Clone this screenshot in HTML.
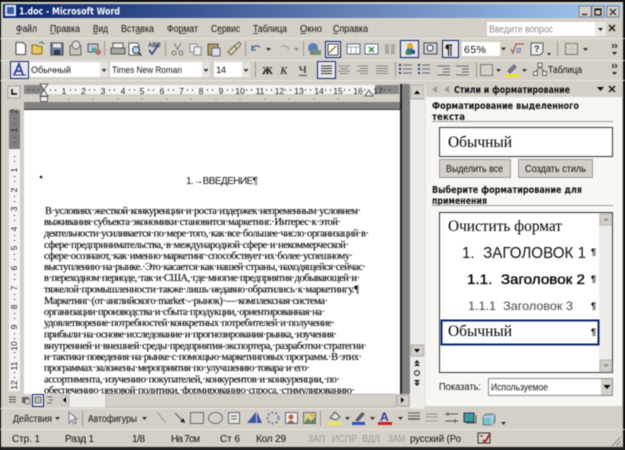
<!DOCTYPE html>
<html><head><meta charset="utf-8"><title>1.doc - Microsoft Word</title>
<style>
html,body{margin:0;padding:0;background:#000;width:625px;height:450px;overflow:hidden}
svg{display:block;filter:blur(.42px)}
text{font-family:"Liberation Sans",sans-serif;font-size:10px;fill:#111;white-space:pre}
.s{font-family:"Liberation Serif",serif;font-size:10.5px;fill:#000;stroke:#000;stroke-width:.12px}
.b{font-family:"DejaVu Sans",sans-serif;font-size:10px;font-weight:bold;fill:#111}
.g{fill:#999}
.r{font-size:8.5px;text-anchor:middle;fill:#222}
</style></head><body>
<svg xmlns="http://www.w3.org/2000/svg" width="625" height="450" viewBox="0 0 625 450">
<defs>
<linearGradient id="t" x1="0" x2="1" y1="0" y2="0"><stop offset="0" stop-color="#0a246a"/><stop offset="1" stop-color="#a6caf0"/></linearGradient>
</defs>
<rect width="625" height="450" fill="#111"/>
<rect x="1" y="2" width="622" height="446" fill="#d4d0c8"/>
<rect x="3" y="4" width="618" height="14" fill="url(#t)"/>
<rect x="5" y="5" width="11" height="11" fill="#dfe6f2"/><rect x="7" y="7" width="7" height="7" fill="#3a5fa8"/>
<text x="19" y="14.5" class="b" fill="#fff" style="fill:#fff" textLength="101" lengthAdjust="spacingAndGlyphs">1.doc - Microsoft Word</text>
<g fill="#d4d0c8" stroke="#555" stroke-width=".6"><rect x="579" y="6" width="12" height="11"/><rect x="592" y="6" width="12" height="11"/><rect x="607" y="6" width="12" height="11"/></g>
<path d="M582 14.5h5M595 9h6v6h-6zM595 9.6h6M610 9l6 6M616 9l-6 6" stroke="#111" stroke-width="1.2" fill="none"/>

<!-- menu -->
<g>
<text x="16" y="32" textLength="21" lengthAdjust="spacingAndGlyphs">Файл</text>
<text x="50" y="32" textLength="30" lengthAdjust="spacingAndGlyphs">Правка</text>
<text x="93" y="32" textLength="15" lengthAdjust="spacingAndGlyphs">Вид</text>
<text x="121" y="32" textLength="33" lengthAdjust="spacingAndGlyphs">Вставка</text>
<text x="167" y="32" textLength="31" lengthAdjust="spacingAndGlyphs">Формат</text>
<text x="211" y="32" textLength="29" lengthAdjust="spacingAndGlyphs">Сервис</text>
<text x="253" y="32" textLength="34" lengthAdjust="spacingAndGlyphs">Таблица</text>
<text x="300" y="32" textLength="22" lengthAdjust="spacingAndGlyphs">Окно</text>
<text x="333" y="32" textLength="35" lengthAdjust="spacingAndGlyphs">Справка</text>
<path d="M16 33.5h5M50 33.5h5M93 33.5h5M136 33.5h5M180 33.5h6M218 33.5h5M253 33.5h5M300 33.5h6M333 33.5h5" stroke="#333" stroke-width=".7"/>
</g>
<rect x="487" y="22" width="108" height="14" fill="#fff"/><rect x="595" y="22" width="11" height="14" fill="#e8e6e0"/>
<text x="489" y="32.500" style="fill:#8a8a8a" textLength="64" lengthAdjust="spacingAndGlyphs">Введите вопрос</text>
<path d="M598 28h5l-2.500 3z" fill="#222"/><path d="M609 25l6 6M615 25l-6 6" stroke="#111" stroke-width="1.400"/>

<!-- separators -->
<path d="M0 38.500H625M0 60.500H625M0 80.500H625" stroke="#ecebe6" stroke-width=".7"/>
<path d="M104.500 41v15M165.500 41v15M245.500 41v15M303.500 41v15M557.500 41v15M255 60" stroke="#9a968c"/>
<path d="M395.500 62v15M476.500 62v15M255.500 62v15" stroke="#9a968c"/>

<!-- toolbar 1 icons -->
<path d="M16 42.500h7l2.500 2.500v9.500H16z" fill="#fff" stroke="#444"/>
<path d="M32 45h5l1 1.500h4v7.500H32z" fill="#e8c860" stroke="#8a7020"/><path d="M39 43l3 -1 2 2" stroke="#2a7a50" fill="none"/>
<rect x="51" y="43" width="12" height="12" fill="#6c7f9a" stroke="#445"/><rect x="53" y="43.500" width="8" height="4" fill="#e8e8e8"/><rect x="54" y="50" width="6" height="5" fill="#2c3a55"/>
<rect x="70" y="46" width="11" height="9" fill="#c8c8c0" stroke="#666"/><circle cx="76" cy="45" r="4" fill="#ddd" stroke="#666"/>
<rect x="88" y="44" width="10" height="8" fill="#b8c8d8" stroke="#556"/><circle cx="98" cy="52" r="3" fill="#c07070"/><circle cx="94" cy="50" r="2.500" fill="#50a0a0"/>
<rect x="111" y="48" width="14" height="6" fill="#a8a8a0" stroke="#555"/><rect x="113" y="43" width="10" height="5" fill="#eee" stroke="#555"/>
<path d="M129 43h8l2 2v10h-10z" fill="#fff" stroke="#555"/><circle cx="136" cy="50" r="3.500" fill="#b8d8e8" stroke="#334"/><path d="M138.500 52.500l3 3" stroke="#333" stroke-width="1.500"/>
<text x="148" y="47" style="font-size:6px;font-weight:bold;fill:#335">ABC</text><path d="M149 50l3 4 7-10" stroke="#3a4a8a" stroke-width="1.800" fill="none"/>
<path d="M174 43l4 7M181 43l-4 7" stroke="#777"/><circle cx="174" cy="53" r="2" fill="none" stroke="#777"/><circle cx="181" cy="53" r="2" fill="none" stroke="#777"/>
<rect x="190" y="44" width="7" height="8" fill="#eee" stroke="#889"/><rect x="194" y="47" width="7" height="8" fill="#eee" stroke="#889"/>
<rect x="208" y="44" width="10" height="11" fill="#b09a60" stroke="#555"/><rect x="212" y="48" width="8" height="8" fill="#dde" stroke="#667"/>
<path d="M228 52l6-6 3 3-6 6zM234 46l5-4 2 2-4 5" fill="#ded2a8" stroke="#665"/>
<path d="M252 50a5 5 0 0 1 8-3M252 45v5h4" stroke="#5a6ca0" stroke-width="1.500" fill="none"/><path d="M266 48h5l-2.500 3z" fill="#333"/>
<path d="M289 50a5 5 0 0 0-8-3" stroke="#a8a8a8" stroke-width="1.500" fill="none"/><path d="M294 48h5l-2.500 3z" fill="#888"/>
<circle cx="313" cy="48" r="5" fill="#5a80b8"/><rect x="310" y="50" width="11" height="5" fill="#70907a"/>
<rect x="325.500" y="41.500" width="15" height="16" fill="#e8e6e8" stroke="#0a246a"/><rect x="328" y="44" width="10" height="11" fill="#fff" stroke="#444"/><path d="M329 53l7-7" stroke="#a08020" stroke-width="1.500"/>
<rect x="347" y="44" width="13" height="10" fill="#fff" stroke="#5a6a8a"/><path d="M347 47h13M351 47v7M356 47v7" stroke="#7a8aa0" stroke-width=".7"/>
<rect x="365" y="44" width="13" height="10" fill="#fff" stroke="#5a6a8a"/><path d="M369 47l5 5M374 47l-5 5" stroke="#2a8a4a" stroke-width="1.500"/>
<rect x="385" y="44" width="4" height="10" fill="#a8a8a0"/><rect x="391" y="44" width="4" height="10" fill="#a8a8a0"/>
<rect x="400.500" y="40.500" width="18" height="17" fill="#e8e6e8" stroke="#0a246a"/><path d="M405 53l4-8 4 3-2 6z" fill="#3060b0"/><circle cx="410" cy="46" r="3" fill="#d8b020"/><rect x="406" y="50" width="5" height="5" fill="#3a8a50"/><rect x="411" y="50" width="4" height="4" fill="#2848a0"/>
<rect x="424" y="43" width="13" height="11" fill="#cfd4e0" stroke="#445"/><circle cx="430" cy="48" r="3" fill="#fff" stroke="#333"/>
<rect x="442.500" y="40.500" width="16" height="17" fill="#e8e6e8" stroke="#0a246a"/><text x="445" y="54" style="font-size:14px;font-weight:bold;fill:#111">¶</text>
<rect x="462" y="42" width="38" height="14" fill="#fff"/><text x="464" y="53" style="font-size:10.500px" textLength="22">65%</text><path d="M501 47.500h5l-2.500 3z" fill="#333"/>
<path d="M511 49l2 4 3-9h8" stroke="#a04040" fill="none"/><text x="516" y="53" style="font-size:9px;fill:#5060a0;font-style:italic">α</text>
<path d="M531 43h12v9l-3 3h-9z" fill="#eee" stroke="#555"/><text x="534" y="52" style="font-size:9px;font-weight:bold;fill:#334">?</text><path d="M547 53h4l-2 2.500z" fill="#333"/>
<rect x="565.500" y="43.500" width="12" height="11" fill="none" stroke="#777"/><path d="M565 49h12M571.500 43v11" stroke="#aaa" stroke-dasharray="1 1"/><path d="M583 48h5l-2.500 3z" fill="#333"/>
<path d="M612 44l2 2 -2 2M615 44l2 2-2 2" stroke="#222" fill="none"/><path d="M612 52h5l-2.500 3z" fill="#222"/>

<!-- toolbar 2 -->
<rect x="10.500" y="61.500" width="18" height="17" fill="#e8e6e8" stroke="#0a246a"/><path d="M14 75l5-11 4 11M16 71h6" stroke="#2840a0" stroke-width="1.800" fill="none"/><path d="M13 75h13" stroke="#2840a0"/>
<rect x="29" y="62" width="79" height="15" fill="#fff"/><rect x="100" y="62" width="8" height="15" fill="#e4e2dc"/><path d="M101.500 69h5l-2.500 3z" fill="#333"/>
<text x="31" y="73" style="font-size:9.500px" textLength="40" lengthAdjust="spacingAndGlyphs">Обычный</text>
<rect x="110" y="62" width="100" height="15" fill="#fff"/><rect x="202" y="62" width="8" height="15" fill="#e4e2dc"/><path d="M203.500 69h5l-2.500 3z" fill="#333"/>
<text x="112" y="73" style="font-size:9.500px" textLength="70" lengthAdjust="spacingAndGlyphs">Times New Roman</text>
<rect x="214" y="62" width="36" height="15" fill="#fff"/><rect x="242" y="62" width="8" height="15" fill="#e4e2dc"/><path d="M243.500 69h5l-2.500 3z" fill="#333"/>
<text x="216" y="73" style="font-size:9.500px" textLength="10">14</text>
<text x="262" y="74" style="font-family:'Liberation Serif',serif;font-size:11px;font-weight:bold">Ж</text>
<text x="280" y="74" style="font-family:'Liberation Serif',serif;font-size:11px;font-style:italic;font-weight:bold;fill:#444">К</text>
<text x="299" y="73" style="font-size:10.500px;font-weight:bold;fill:#444">Ч</text><path d="M299 75.500h8" stroke="#444"/>
<rect x="317.500" y="61.500" width="18" height="17" fill="#e8e6e8" stroke="#0a246a"/><path d="M321 66h11M321 68.500h11M321 71h11M321 73.500h11" stroke="#333"/>
<path d="M338 66h12M340 68.500h8M338 71h12M340 73.500h8M357 66h11M360 68.500h8M357 71h11M360 73.500h8M376 66h12M376 68.500h12M376 71h12M376 73.500h12" stroke="#888"/>
<path d="M403 65h9M403 69h9M403 73h9M437 66h13M443 69h7M443 72h7M437 75h13M456 66h13M462 69h7M462 72h7M456 75h13M422 65h8M422 69h8M422 73h8" stroke="#667" stroke-width="1"/>
<path d="M399 65h2M399 69h2M399 73h2M418 65h2M418 69h2M418 73h2" stroke="#1a3a80" stroke-width="2"/>
<rect x="480.500" y="64.500" width="12" height="11" fill="none" stroke="#777"/><path d="M496 69h5l-2.500 3z" fill="#333"/>
<path d="M508 71l6-6 2 2-6 6z" fill="#889" stroke="#557"/><rect x="505" y="74" width="14" height="3" fill="#f0e020"/><path d="M522 69h5l-2.500 3z" fill="#333"/>
<rect x="538" y="63" width="4" height="4" fill="#eee" stroke="#666"/><rect x="533.500" y="71.500" width="4" height="4" fill="#eee" stroke="#666"/><rect x="542.500" y="71.500" width="4" height="4" fill="#eee" stroke="#666"/><path d="M540 67l-4 4M540 67l4 4" stroke="#666"/>
<text x="548" y="73" textLength="34" lengthAdjust="spacingAndGlyphs">Таблица</text>
<path d="M612 64l2 2 -2 2M615 64l2 2-2 2" stroke="#222" fill="none"/><path d="M612 72h5l-2.500 3z" fill="#222"/>

<!-- doc area -->
<rect x="8" y="86" width="12" height="12" fill="#e4e2dc" stroke="#888" stroke-width=".7"/><path d="M12 89v5h5" stroke="#000" stroke-width="1.500" fill="none"/>
<rect x="24" y="85" width="376" height="24" fill="#d4d0c8"/>
<rect x="24" y="85" width="20" height="9" fill="#888"/><rect x="44" y="85" width="331" height="9" fill="#f4f4f2"/><rect x="375" y="85" width="24" height="9" fill="#888"/>
<rect x="24" y="102" width="376" height="7" fill="#808080"/>
<rect x="24" y="109" width="376" height="1.500" fill="#333"/>
<g>
<text class="r" x="64" y="94">1</text><text class="r" x="83.500" y="94">2</text><text class="r" x="103" y="94">3</text><text class="r" x="123" y="94">4</text><text class="r" x="142" y="94">5</text><text class="r" x="162" y="94">6</text><text class="r" x="181.500" y="94">7</text><text class="r" x="201" y="94">8</text><text class="r" x="221" y="94">9</text><text class="r" x="240" y="94">10</text><text class="r" x="260" y="94">11</text><text class="r" x="279.500" y="94">12</text><text class="r" x="299" y="94">13</text><text class="r" x="319" y="94">14</text><text class="r" x="338" y="94">15</text><text class="r" x="358" y="94">16</text><text class="r" x="378" y="94">17</text>
</g>
<path d="M28 90h1M33 90h1M38 90h1M50 90h1M55 90h1M70 90h1M75 90h1M89 90h1M94 90h1M109 90h1M114 90h1M129 90h1M134 90h1M148 90h1M153 90h1M168 90h1M173 90h1M187 90h1M192 90h1M207 90h1M212 90h1M227 90h1M232 90h1M246 90h1M251 90h1M266 90h1M271 90h1M285 90h1M290 90h1M305 90h1M310 90h1M325 90h1M330 90h1M344 90h1M349 90h1M364 90h1M384 90h1M389 90h1" stroke="#333" stroke-width="1.500"/>
<path d="M69 98v2M93 98v2M118 98v2M142 98v2M167 98v2M191 98v2M216 98v2M240 98v2M265 98v2M289 98v2M314 98v2M338 98v2" stroke="#999"/>
<path d="M40 84h8l-4 6zM40 96l4-6 4 6z" fill="#eee" stroke="#444" stroke-width=".8"/><rect x="40.500" y="96.500" width="7" height="5" fill="#eee" stroke="#444" stroke-width=".8"/>
<path d="M365 96l4-6 4 6z" fill="#eee" stroke="#444" stroke-width=".8"/>

<rect x="9" y="110" width="11" height="39" fill="#808080"/><rect x="9" y="149" width="11" height="242" fill="#f4f4f2"/>
<g style="font-size:8.500px">
<text class="r" transform="translate(17,111) rotate(-90)">2</text><text class="r" transform="translate(17,130) rotate(-90)">1</text>
<text class="r" transform="translate(17,170) rotate(-90)">1</text><text class="r" transform="translate(17,190) rotate(-90)">2</text><text class="r" transform="translate(17,209) rotate(-90)">3</text><text class="r" transform="translate(17,229) rotate(-90)">4</text><text class="r" transform="translate(17,248) rotate(-90)">5</text><text class="r" transform="translate(17,268) rotate(-90)">6</text><text class="r" transform="translate(17,288) rotate(-90)">7</text><text class="r" transform="translate(17,307) rotate(-90)">8</text><text class="r" transform="translate(17,327) rotate(-90)">9</text><text class="r" transform="translate(17,346) rotate(-90)">10</text><text class="r" transform="translate(17,366) rotate(-90)">11</text><text class="r" transform="translate(17,385) rotate(-90)">12</text>
</g>
<path d="M14.500 118v1M14.500 123v1M14.500 137v1M14.500 142v1M14.500 156v1M14.500 161v1M14.500 176v1M14.500 181v1M14.500 196v1M14.500 201v1M14.500 215v1M14.500 220v1M14.500 235v1M14.500 240v1M14.500 254v1M14.500 259v1M14.500 274v1M14.500 279v1M14.500 294v1M14.500 299v1M14.500 313v1M14.500 318v1M14.500 333v1M14.500 338v1M14.500 352v1M14.500 357v1M14.500 372v1M14.500 377v1" stroke="#333" stroke-width="1.200"/>

<rect x="24" y="110" width="376" height="284" fill="#fff"/>
<rect x="400" y="84" width="2" height="310" fill="#222"/><rect x="402" y="84" width="8" height="310" fill="#808080"/>
<rect x="410" y="84" width="14" height="324" fill="#eeece8"/>
<rect x="411" y="85" width="13" height="14" fill="#d4d0c8" stroke="#888" stroke-width=".6"/><path d="M414 94h6l-3-3.500z" fill="#000"/>
<rect x="411" y="345" width="13" height="11" fill="#d4d0c8" stroke="#888" stroke-width=".6"/><path d="M414 349h6l-3 3.500z" fill="#000"/>
<path d="M414 363l3-3 3 3zM414 366l3-3 3 3" fill="#222"/><circle cx="417" cy="373" r="2.500" fill="#ddd" stroke="#222"/><path d="M414 383l3 3 3-3zM414 380l3 3 3-3" fill="#222"/>

<g clip-path="url(#c)">
<clipPath id="c"><rect x="24" y="110" width="376" height="284"/></clipPath>
<circle cx="41" cy="177" r="1.300" fill="#111"/>
<text x="186" y="184" style="font-size:10px;fill:#111" textLength="72" lengthAdjust="spacing">1.→ВВЕДЕНИЕ¶</text>
<text class="s" x="45" y="214" textLength="316">В·условиях·жесткой·конкуренции·и·роста·издержек·непременным·условием·</text>
<text class="s" x="44" y="225" textLength="297">выживания·субъекта·экономики·становится·маркетинг.·Интерес·к·этой·</text>
<text class="s" x="44" y="236.500" textLength="325">деятельности·усиливается·по·мере·того,·как·все·большее·число·организаций·в·</text>
<text class="s" x="44" y="248" textLength="305">сфере·предпринимательства,·в·международной·сфере·и·некоммерческой·</text>
<text class="s" x="44" y="259" textLength="309">сфере·осознают,·как·именно·маркетинг·способствует·их·более·успешному·</text>
<text class="s" x="44" y="270" textLength="322">выступлению·на·рынке.·Это·касается·как·нашей·страны,·находящейся·сейчас·</text>
<text class="s" x="44" y="281" textLength="316">в·переходном·периоде,·так·и·США,·где·многие·предприятия·добывающей·и·</text>
<text class="s" x="44" y="292.500" textLength="315">тяжелой·промышленности·также·лишь·недавно·обратились·к·маркетингу.¶</text>
<text class="s" x="44" y="304" textLength="284">Маркетинг·(от·английского·market·-·рынок)·—·комплексная·система·</text>
<text class="s" x="44" y="315" textLength="281">организации·производства·и·сбыта·продукции,·ориентированная·на·</text>
<text class="s" x="44" y="326" textLength="291">удовлетворение·потребностей·конкретных·потребителей·и·получение·</text>
<text class="s" x="44" y="337.500" textLength="293">прибыли·на·основе·исследование·и·прогнозирования·рынка,·изучения·</text>
<text class="s" x="44" y="349" textLength="323">внутренней·и·внешней·среды·предприятия-экспортера,·разработки·стратегии·</text>
<text class="s" x="44" y="360" textLength="318">и·тактики·поведения·на·рынке·с·помощью·маркетинговых·программ.·В·этих·</text>
<text class="s" x="44" y="371" textLength="266">программах·заложены·мероприятия·по·улучшению·товара·и·его·</text>
<text class="s" x="44" y="382.500" textLength="296">ассортимента,·изучению·покупателей,·конкурентов·и·конкуренции,·по·</text>
<text class="s" x="44" y="393.500" textLength="311">обеспечению·ценовой·политики,·формированию·спроса,·стимулированию·</text>
</g>

<!-- h scroll -->
<rect x="2" y="394" width="408" height="14" fill="#d4d0c8"/>
<rect x="60" y="394" width="340" height="13" fill="#eeece8"/>
<rect x="106" y="394" width="290" height="13" fill="#d4d0c8" stroke="#aaa" stroke-width=".6"/>
<rect x="61" y="395" width="8" height="11" fill="#d4d0c8" stroke="#999" stroke-width=".6"/><path d="M66 397v6l-3-3z" fill="#000"/>
<rect x="397" y="395" width="12" height="11" fill="#d4d0c8" stroke="#888" stroke-width=".6"/><path d="M401 397v6l3-3z" fill="#000"/>
<path d="M9 397h7M9 399.500h7M9 402h7" stroke="#555"/>
<rect x="22" y="397" width="7" height="6" fill="#666"/><rect x="25" y="399" width="5" height="5" fill="#ccc" stroke="#444" stroke-width=".5"/>
<rect x="32.500" y="394.500" width="11" height="12" fill="#e8e6e8" stroke="#0a246a"/><rect x="35" y="397" width="6" height="6" fill="#bbb" stroke="#444" stroke-width=".7"/>
<path d="M47 397h5M49 400h4M47 403h5" stroke="#666"/>

<!-- drawing toolbar -->
<path d="M0 408.500H424" stroke="#ecebe6" stroke-width=".7"/>
<path d="M82.500 411v15M320.500 411v15" stroke="#9a968c"/>
<text x="13" y="422" textLength="39" lengthAdjust="spacingAndGlyphs">Действия</text><path d="M55 417h5l-2.500 3z" fill="#333"/>
<path d="M69 412v11l3-3 2 4 2-1-2-4h3z" fill="#eee" stroke="#778"/>
<text x="88" y="422" textLength="49" lengthAdjust="spacingAndGlyphs">Автофигуры</text><path d="M142 417h5l-2.500 3z" fill="#333"/>
<path d="M157 412l9 11" stroke="#999"/><path d="M175 413l9 9" stroke="#555"/><path d="M185 423l-5-1.500 3.500-3.500z" fill="#223"/>
<rect x="190.500" y="412.500" width="13" height="11" fill="none" stroke="#667"/><ellipse cx="215.500" cy="418" rx="7" ry="5.500" fill="none" stroke="#667"/>
<rect x="228.500" y="412.500" width="11" height="11" fill="#e8e8e0" stroke="#667"/><path d="M231 416h6M231 419h6" stroke="#667"/>
<path d="M247 423l9-11v11zM257 412l5 11h-5z" fill="#3454a8"/>
<circle cx="273" cy="418" r="5.500" fill="none" stroke="#6a7aa0" stroke-width="2" stroke-dasharray="2 2"/>
<rect x="285.500" y="412.500" width="12" height="11" fill="#eee" stroke="#667"/><circle cx="291" cy="417" r="2.500" fill="#c06050"/><path d="M287 423l4-3 4 3" fill="#a06050"/>
<rect x="303.500" y="412.500" width="12" height="11" fill="#d8d090" stroke="#667"/><path d="M304 423l4-5 3 3 4-4v6z" fill="#6a8a50"/><circle cx="312" cy="415" r="1.500" fill="#d8b020"/>
<path d="M330 418l5-6 5 5-4 3z" fill="#ddd" stroke="#555"/><rect x="328" y="422" width="13" height="3" fill="#f0e840"/><path d="M345 417h5l-2.500 3z" fill="#333"/>
<path d="M356 420l6-7 2 1-6 7z" fill="#778" stroke="#445"/><rect x="352" y="422" width="13" height="3" fill="#3050c8"/><path d="M370 417h5l-2.500 3z" fill="#333"/>
<text x="380" y="421" style="font-size:12px;font-weight:bold;fill:#26408a">A</text><rect x="378" y="422" width="14" height="3" fill="#d02020"/><path d="M398 417h5l-2.500 3z" fill="#333"/>
<path d="M408 413h12M408 416h12" stroke="#555"/><path d="M408 419h12" stroke="#555" stroke-width="1.500"/>
<path d="M426 414h12M426 417h12" stroke="#666" stroke-dasharray="1.500 1"/><path d="M426 421h12" stroke="#666" stroke-dasharray="1 1"/>
<path d="M445 414h13M445 421h13M448 412v4M455 419v4" stroke="#555"/>
<rect x="464" y="413" width="10" height="9" fill="#3a9aa0" stroke="#335"/><path d="M466 423h10v-8" stroke="#555" fill="none"/>
<path d="M483 417l3-3h9v8l-3 3h-9z" fill="#7ac0c8" stroke="#778"/><path d="M483 417h9v8M492 417l3-3" stroke="#dde" fill="none"/>
<path d="M501 422h5l-2.500 3z" fill="#333"/>

<!-- task pane -->
<rect x="424" y="84" width="2" height="322" fill="#fff" opacity=".5"/>
<rect x="426" y="84" width="196" height="13" fill="#d4d0c8"/>
<rect x="426" y="97" width="196" height="309" fill="#f7f7f4"/>
<path d="M437 86l-5 3.500 5 3.500zM449 86v7l-5-3.500z" fill="#9c9a94"/>
<text x="454" y="93" class="b" textLength="116" lengthAdjust="spacingAndGlyphs">Стили и форматирование</text>
<path d="M597 87h7l-3.500 4z" fill="#111"/><path d="M609 86l6 6M615 86l-6 6" stroke="#111" stroke-width="1.400"/>

<text x="432" y="109" class="b" textLength="147" lengthAdjust="spacingAndGlyphs">Форматирование выделенного</text>
<text x="432" y="120" class="b" textLength="33" lengthAdjust="spacingAndGlyphs">текста</text>
<path d="M432 121.500H613" stroke="#9c9a94"/>
<rect x="439.500" y="127.500" width="173" height="29" fill="#fff" stroke="#333"/>
<text x="448" y="147" class="s" style="font-size:16px;stroke-width:0" textLength="64" lengthAdjust="spacingAndGlyphs">Обычный</text>
<rect x="439.500" y="159.500" width="71" height="18" fill="#d4d0c8" stroke="#999"/>
<rect x="518.500" y="159.500" width="74" height="18" fill="#d4d0c8" stroke="#999"/>
<text x="446" y="172" textLength="57" lengthAdjust="spacingAndGlyphs">Выделить все</text>
<text x="525" y="172" textLength="61" lengthAdjust="spacingAndGlyphs">Создать стиль</text>
<text x="432" y="193" class="b" textLength="150" lengthAdjust="spacingAndGlyphs">Выберите форматирование для</text>
<text x="432" y="204" class="b" textLength="55" lengthAdjust="spacingAndGlyphs">применения</text>
<path d="M432 205.500H613" stroke="#9c9a94"/>

<rect x="439.500" y="212.500" width="173" height="160" fill="#fff" stroke="#333"/>
<rect x="599" y="213" width="13" height="159" fill="#eeece8"/>
<rect x="600" y="214" width="12" height="11" fill="#d4d0c8" stroke="#999" stroke-width=".6"/><path d="M603 221h6l-3-3.500z" fill="#999"/>
<rect x="600" y="360" width="12" height="12" fill="#d4d0c8" stroke="#999" stroke-width=".6"/><path d="M603 364h6l-3 3.500z" fill="#999"/>
<text x="448" y="231" class="s" style="font-size:16px;stroke-width:0" textLength="114" lengthAdjust="spacingAndGlyphs">Очистить формат</text>
<text x="462" y="258" style="font-size:16px;fill:#111" textLength="124" lengthAdjust="spacingAndGlyphs">1.  ЗАГОЛОВОК 1</text>
<text x="467" y="284" style="font-size:14px;fill:#000;stroke:#000;stroke-width:.35px" textLength="118" lengthAdjust="spacingAndGlyphs">1.1.  Заголовок 2</text>
<text x="468" y="310" style="font-size:12px;fill:#444" textLength="105" lengthAdjust="spacingAndGlyphs">1.1.1  Заголовок 3</text>
<g><text x="591" y="255" style="font-size:9px;font-weight:bold;fill:#000">¶</text><text x="591" y="282" style="font-size:9px;font-weight:bold;fill:#000">¶</text><text x="591" y="309" style="font-size:9px;font-weight:bold;fill:#000">¶</text><text x="591" y="335" style="font-size:9px;font-weight:bold;fill:#000">¶</text></g>
<rect x="441.500" y="320.500" width="157" height="24" fill="none" stroke="#0a246a" stroke-width="2"/>
<text x="448" y="336" class="s" style="font-size:16px;stroke-width:0" textLength="64" lengthAdjust="spacingAndGlyphs">Обычный</text>

<text x="439" y="390" textLength="42" lengthAdjust="spacingAndGlyphs">Показать:</text>
<rect x="488.500" y="378.500" width="124" height="17" fill="#fff" stroke="#888"/>
<rect x="601" y="379" width="11" height="16" fill="#d4d0c8"/><path d="M603.500 385h7l-3.500 4z" fill="#000"/>
<text x="491" y="390.500" textLength="57" lengthAdjust="spacingAndGlyphs">Используемое</text>

<!-- status bar -->
<path d="M0 429.500H625" stroke="#ecebe6" stroke-width=".7"/>
<text x="12" y="442" textLength="28" lengthAdjust="spacing">Стр. 1</text>
<text x="65" y="442" textLength="29" lengthAdjust="spacing">Разд 1</text>
<text x="132" y="442" textLength="13" lengthAdjust="spacing">1/8</text>
<text x="171" y="442" textLength="29" lengthAdjust="spacing">На 7см</text>
<text x="220" y="442" textLength="20" lengthAdjust="spacing">Ст 6</text>
<text x="256" y="442" textLength="30" lengthAdjust="spacing">Кол 29</text>
<g style="font-size:9px"><text x="308" y="442" class="g" textLength="17" lengthAdjust="spacingAndGlyphs">ЗАП</text><text x="332" y="442" class="g" textLength="25" lengthAdjust="spacingAndGlyphs">ИСПР</text><text x="362" y="442" class="g" textLength="18" lengthAdjust="spacingAndGlyphs">ВДЛ</text><text x="388" y="442" class="g" textLength="17" lengthAdjust="spacingAndGlyphs">ЗАМ</text></g>
<text x="410" y="442" textLength="51" lengthAdjust="spacingAndGlyphs">русский (Ро</text>
<rect x="478" y="433" width="12" height="10" fill="#d8d4c8" stroke="#333"/><path d="M483 440l2 2 5-8" stroke="#a02030" stroke-width="1.800" fill="none"/><path d="M480 436h3" stroke="#333"/>
<path d="M612 446l9-9M616 446l5-5M620 446l1-1" stroke="#888"/>
<rect x="0" y="447" width="625" height="3" fill="#222"/>
</svg>
</body></html>
